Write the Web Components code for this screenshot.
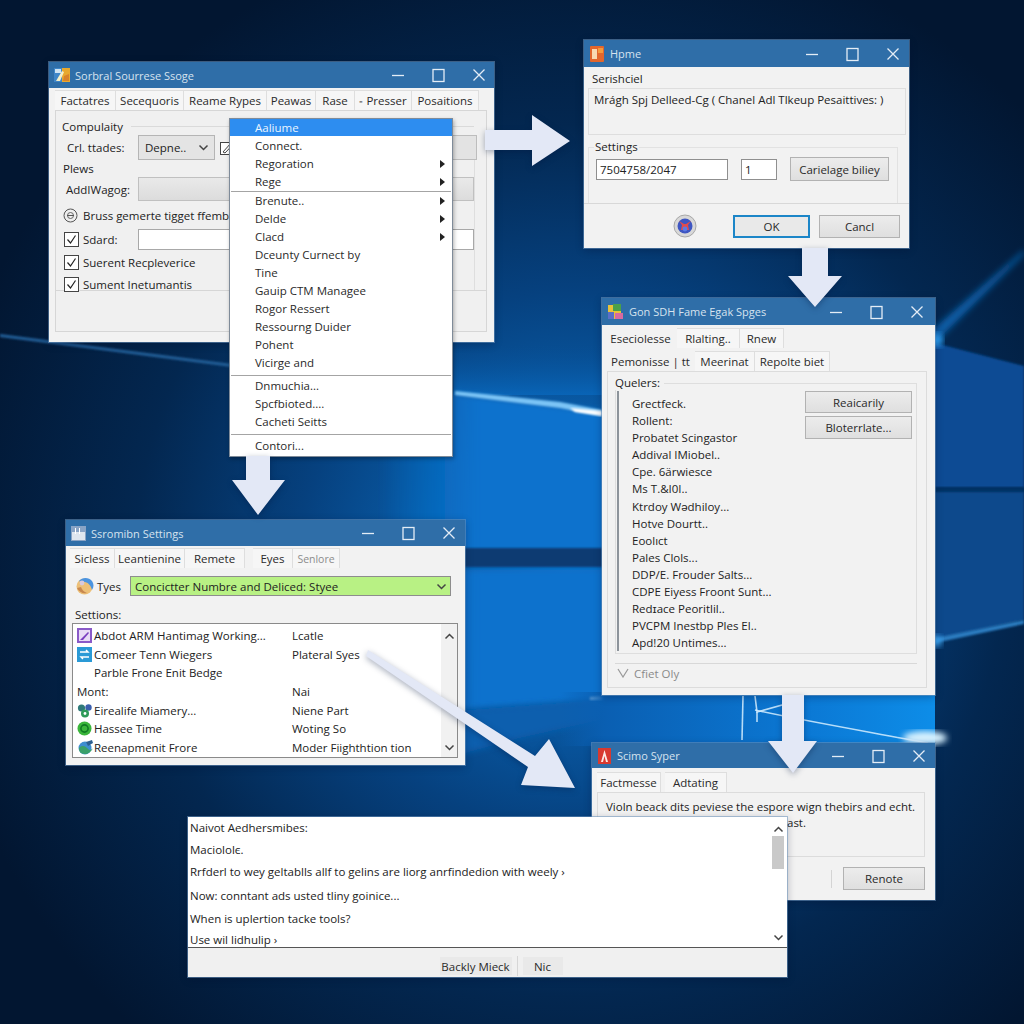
<!doctype html>
<html>
<head>
<meta charset="utf-8">
<title>Windows</title>
<style>
  html, body { margin: 0; width: 1024px; height: 1024px; overflow: hidden; background: #031c3e; }
  body { position: relative; font: 11.5px "Open Sans", "Liberation Sans", sans-serif; color: #222; }
</style>
</head>
<body>
<desktop-wallpaper></desktop-wallpaper>
<source-window></source-window>
<flow-arrow points="485,130 532,130 532,115 570,141 532,166 532,150 485,150"></flow-arrow>
<home-dialog></home-dialog>
<queries-window></queries-window>
<flow-arrow points="802,248 828,248 828,276 842,276 815,307 788,276 802,276"></flow-arrow>
<sections-window></sections-window>
<flow-arrow points="246,456 270,456 270,480 285,480 258,515 232,480 246,480"></flow-arrow>
<flow-arrow points="368,650 535,756 549,739 575,788 521,785 528,767 366,656"></flow-arrow>
<style-window></style-window>
<flow-arrow points="782,695 804,695 804,741 817,741 793,773 768,741 782,741"></flow-arrow>
<notes-window></notes-window>

<script>
const chevron = (dir) => `<svg width="11" height="7" viewBox="0 0 11 7"><path d="${dir === 'up' ? 'M1.5 5.5 5.5 1.5 9.5 5.5' : 'M1.5 1.5 5.5 5.5 9.5 1.5'}" fill="none" stroke="#444" stroke-width="1.5"/></svg>`;

class DesktopWallpaper extends HTMLElement {
    constructor() {
        super();
        this.attachShadow({ mode: 'open' });
        this.shadowRoot.innerHTML = `
            <style>
                :host { position: absolute; inset: 0; display: block; }
                svg { display: block; }
            </style>
            <svg width="1024" height="1024" viewBox="0 0 1024 1024">
                <defs>
                    <radialGradient id="sky" gradientUnits="userSpaceOnUse" cx="570" cy="560" r="640">
                        <stop offset="0" stop-color="#0b70c8"/>
                        <stop offset=".22" stop-color="#095ca8"/>
                        <stop offset=".42" stop-color="#06417f"/>
                        <stop offset=".68" stop-color="#032750"/>
                        <stop offset="1" stop-color="#021631"/>
                    </radialGradient>
                    <linearGradient id="gap" gradientUnits="userSpaceOnUse" x1="560" x2="935" y1="0" y2="0">
                        <stop offset="0" stop-color="#0a5fb2" stop-opacity="0"/>
                        <stop offset=".12" stop-color="#0a5fb2"/>
                        <stop offset=".65" stop-color="#0b78d4"/>
                        <stop offset="1" stop-color="#0d8de8"/>
                    </linearGradient>
                    <linearGradient id="fade" gradientUnits="userSpaceOnUse" x1="380" x2="480" y1="0" y2="0">
                        <stop offset="0" stop-color="#0a72cd" stop-opacity="0"/>
                        <stop offset="1" stop-color="#0a72cd"/>
                    </linearGradient>
                    <linearGradient id="upper" x1="0" x2="0" y1="0" y2="1">
                        <stop offset="0" stop-color="#074e94" stop-opacity="0"/>
                        <stop offset="1" stop-color="#0964b6"/>
                    </linearGradient>
                    <filter id="b1"><feGaussianBlur stdDeviation="1"/></filter>
                    <filter id="b3"><feGaussianBlur stdDeviation="3"/></filter>
                </defs>
                <rect width="1024" height="1024" fill="url(#sky)"/>
                <rect x="454" y="345" width="150" height="50" fill="url(#upper)"/>
                <polygon points="380,384 605,412 605,560 380,560" fill="url(#fade)" filter="url(#b3)"/>
                <polygon points="380,570 605,570 605,700 380,716" fill="url(#fade)" filter="url(#b3)"/>
                <rect x="440" y="548" width="170" height="19" fill="#0a3a72" filter="url(#b1)"/>
                <polygon points="455,391 560,402 602,410 602,416 560,408 455,395" fill="#7cc4f6" filter="url(#b1)"/>
                <polygon points="570,408 602,411 602,416 575,412" fill="#fff" filter="url(#b1)"/>
                <polygon points="440,712 600,700 600,720 520,738 440,760" fill="#0a5fae" filter="url(#b3)"/>
                <polygon points="590,697 603,696 603,700 590,700" fill="#e8f6ff" filter="url(#b1)"/>
                <polygon points="0,334 232,364 232,367 0,337" fill="#245f98" filter="url(#b1)"/>
                <polygon points="935,343 1024,366 1024,488 935,488" fill="#084c94" filter="url(#b1)"/>
                <rect x="930" y="487" width="94" height="6" fill="#063263" filter="url(#b1)"/>
                <polygon points="935,492 1024,492 1024,620 935,640" fill="#07488c" filter="url(#b1)"/>
                <polygon points="930,332 1024,250 1024,254 936,342" fill="#0c5ea8" filter="url(#b3)"/>
                <circle cx="936" cy="340" r="7" fill="#2fa0f4" filter="url(#b3)"/>
                <polygon points="935,638 1024,620 1024,624 935,643" fill="#2b7cc0" filter="url(#b1)"/>
                <circle cx="936" cy="641" r="6" fill="#3da8f6" filter="url(#b3)"/>
                <rect x="560" y="692" width="375" height="54" fill="url(#gap)"/>
                <ellipse cx="925" cy="738" rx="22" ry="7" fill="#d8f2ff" filter="url(#b3)"/>
                <g fill="none" stroke="#d6eeff" stroke-opacity=".85" stroke-width="1.6">
                    <path d="M755 710 C 810 722 870 732 928 743"/>
                    <path d="M755 696 757 712 800 700"/>
                    <path d="M757 712 757 722"/>
                    <path d="M743 696 742 740"/>
                </g>
            </svg>
        `;
    }
}

class FlowArrow extends HTMLElement {
    constructor() {
        super();
        this.attachShadow({ mode: 'open' });
    }
    connectedCallback() {
        this.shadowRoot.innerHTML = `
            <style>
                :host { position: absolute; left: 0; top: 0; display: block; width: 1024px; height: 1024px; pointer-events: none; }
                svg { display: block; filter: drop-shadow(0 2px 3px rgba(0,20,60,.35)); }
            </style>
            <svg width="1024" height="1024"><polygon points="${this.getAttribute('points')}" fill="#e3e8f6"/></svg>
        `;
    }
}

class AppWindow extends HTMLElement {
    constructor() {
        super();
        this.attachShadow({ mode: 'open' });
    }
    connectedCallback() {
        const a = (n) => this.getAttribute(n);
        this.style.left = a('x') + 'px';
        this.style.top = a('y') + 'px';
        this.style.width = a('w') + 'px';
        this.style.height = a('h') + 'px';
        const bar = a('heading') === null ? '' : `
            <div class="title" style="height:${a('bar') || 26}px;padding-right:${a('pad') || 10}px">
                <slot name="icon"></slot>
                <span>${a('heading')}</span>
                <svg width="93" height="16" viewBox="0 0 93 16" fill="none" stroke="#e4edf6" stroke-width="1.3">
                    <path d="M0 8.5H12"/>
                    <rect x="41" y="2.5" width="11" height="12"/>
                    <path d="M81.5 2.5 92.5 13.5M92.5 2.5 81.5 13.5"/>
                </svg>
            </div>`;
        this.shadowRoot.innerHTML = `
            <style>
                :host { position: absolute; display: block; box-sizing: border-box; background: #f2f2f2; box-shadow: 0 0 0 1px rgba(110,150,190,.55), 0 2px 8px rgba(0,10,40,.3); }
                .title { display: flex; align-items: center; gap: 5px; padding-left: 5px; background: #2f6ea8; color: #d6e3ef; font-size: 11px; }
                .title span { flex: 1; white-space: nowrap; }
                ::slotted(svg) { flex: none; }
                .title svg { flex: none; }
                .body { display: block; }
            </style>
            ${bar}
            <div class="body"><slot></slot></div>
        `;
    }
}

class WinTabs extends HTMLElement {
    constructor() {
        super();
        this.attachShadow({ mode: 'open' });
        this.shadowRoot.innerHTML = `
            <style>
                :host { display: flex; align-items: stretch; height: 20px; }
            </style>
            <slot></slot>
        `;
    }
}

class WinTab extends HTMLElement {
    constructor() {
        super();
        this.attachShadow({ mode: 'open' });
        this.shadowRoot.innerHTML = `
            <style>
                :host { display: flex; flex: none; align-items: center; justify-content: center; box-sizing: border-box; white-space: nowrap; background: #f6f6f6; border: 1px solid #dedede; border-bottom: 0; border-left: 0; color: #2a2a2a; }
                :host([dim]) { color: #8c8c8c; font-size: 10.5px; }
                :host([flat]) { background: transparent; border-color: transparent; }
            </style>
            <slot></slot>
        `;
    }
    connectedCallback() {
        this.style.width = this.getAttribute('w') + 'px';
        if (this.hasAttribute('gap')) this.style.marginLeft = this.getAttribute('gap') + 'px';
    }
}

class WinButton extends HTMLElement {
    constructor() {
        super();
        this.attachShadow({ mode: 'open' });
        this.shadowRoot.innerHTML = `
            <style>
                :host { display: flex; flex: none; align-items: center; justify-content: center; box-sizing: border-box; white-space: nowrap; background: linear-gradient(#ececec, #dfdfdf); border: 1px solid #b2b2b2; color: #2a2a2a; }
                :host([primary]) { border: 2px solid #1c86c8; background: #e9e9e9; }
                :host([plain]) { border: 0; background: #e9e9e9; }
            </style>
            <slot></slot>
        `;
    }
}

class ContextMenu extends HTMLElement {
    constructor() {
        super();
        this.attachShadow({ mode: 'open' });
        this.shadowRoot.innerHTML = `
            <style>
                :host { position: absolute; display: block; box-sizing: border-box; background: #fff; border: 1px solid #7f8b99; box-shadow: 1px 2px 4px rgba(0,0,0,.3); }
            </style>
            <slot></slot>
        `;
    }
}

class MenuItem extends HTMLElement {
    constructor() {
        super();
        this.attachShadow({ mode: 'open' });
        this.shadowRoot.innerHTML = `
            <style>
                :host { display: flex; align-items: center; justify-content: space-between; box-sizing: border-box; height: 18px; padding: 0 7px 2px 25px; white-space: nowrap; color: #2a2a2a; }
                :host([active]) { background: #2d8df0; color: #eaf5ff; height: 17px; margin-bottom: 1px; padding-bottom: 1px; }
                i { display: none; width: 0; height: 0; margin-top: 2px; border-left: 5px solid #222; border-top: 4px solid transparent; border-bottom: 4px solid transparent; }
                :host([more]) i { display: block; }
            </style>
            <slot></slot><i></i>
        `;
    }
}

class MenuLine extends HTMLElement {
    constructor() {
        super();
        this.attachShadow({ mode: 'open' });
        this.shadowRoot.innerHTML = `
            <style>
                :host { display: block; height: 1px; margin: 0 1px; background: #a4a4a4; }
            </style>
        `;
    }
}

class CheckRow extends HTMLElement {
    constructor() {
        super();
        this.attachShadow({ mode: 'open' });
        this.shadowRoot.innerHTML = `
            <style>
                :host { display: flex; align-items: center; gap: 4px; padding-left: 8px; white-space: nowrap; }
                span { flex: none; width: 13px; height: 13px; border: 1px solid #444; background: #fff; display: flex; align-items: center; justify-content: center; }
            </style>
            <span><svg width="11" height="11" viewBox="0 0 11 11"><path d="M1.5 5.5 4.5 9 9.5 1.5" fill="none" stroke="#222" stroke-width="1.2"/></svg></span>
            <slot></slot>
        `;
    }
}

class SourceWindow extends HTMLElement {
    constructor() {
        super();
        this.attachShadow({ mode: 'open' });
        this.shadowRoot.innerHTML = `
            <style>
                :host { display: contents; }
                win-tabs { margin: 2px 0 0 6px; }
                .panel { box-sizing: border-box; margin: 0 7px 0 6px; height: 222px; padding: 7px 0 0 0; border: 1px solid #d6d6d6; background: #f0f0f0; }
                .row { display: flex; align-items: center; white-space: nowrap; }
                .legend { height: 17px; padding-left: 6px; gap: 8px; }
                .legend hr { flex: 1; margin: 0 12px 0 0; border: 0; border-top: 1px solid #dadada; }
                .crl { height: 25px; }
                .crl label { width: 82px; padding-left: 11px; box-sizing: border-box; flex: none; }
                .select { box-sizing: border-box; flex: none; width: 77px; height: 25px; display: flex; align-items: center; justify-content: space-between; padding: 0 5px 0 6px; background: #e4e4e4; border: 1px solid #b5b5b5; }
                .fill { flex: 1; box-sizing: border-box; height: 25px; margin: 0 9px 0 4px; background: #e3e3e3; border: 1px solid #bdbdbd; }
                .group { box-sizing: border-box; height: 131px; margin-right: 11px; border-right: 1px solid #dedede; }
                .add { height: 24px; }
                .add label { width: 82px; padding-left: 10px; box-sizing: border-box; flex: none; }
                .add div { flex: 1; height: 24px; box-sizing: border-box; background: linear-gradient(#e9e9e9, #dcdcdc); border: 1px solid #c0c0c0; }
                .radio { height: 28px; gap: 5px; padding-left: 7px; }
                .sdard { height: 21px; }
                .sdard check-row { height: 21px; width: 82px; flex: none; box-sizing: border-box; }
                .sdard div { flex: 1; height: 21px; box-sizing: border-box; background: #fff; border: 1px solid #a8a8a8; }
                check-row { height: 25px; }
                .line { height: 0; margin-top: -1px; border-bottom: 1px solid #d6d6d6; }
                context-menu { left: 180px; top: 56px; width: 224px; height: 339px; }
                .s2 { margin: 3px 1px 1px; }
                .s3 { margin: 3px 1px 2px; }
            </style>
            <app-window heading="Sorbral Sourrese Ssoge" pad="9" x="49" y="62" w="445" h="280">
                <svg slot="icon" width="16" height="16" viewBox="0 0 16 16"><rect y="1" width="9" height="14" fill="#3f86c8"/><rect x="8" y="1" width="8" height="14" fill="#e8a92f"/><path d="M2 14 8 4l2 1-4 9z" fill="#f5efc8"/><path d="M1 2h6v4H1z" fill="#cfe3f2"/><path d="M10 9l5-2v7h-6z" fill="#d9822a"/></svg>
                <win-tabs>
                    <win-tab w="61">Factatres</win-tab>
                    <win-tab w="68">Secequoris</win-tab>
                    <win-tab w="83">Reame Rypes</win-tab>
                    <win-tab w="49">Peawas</win-tab>
                    <win-tab w="39">Rase</win-tab>
                    <win-tab w="57">⁃ Presser</win-tab>
                    <win-tab w="67">Posaitions</win-tab>
                </win-tabs>
                <div class="panel">
                    <div class="row legend"><span>Compulaity</span><hr></div>
                    <div class="row crl">
                        <label>Crl. ttades:</label>
                        <div class="select"><span>Depne..</span>${chevron('down')}</div>
                        <svg style="margin-left:5px;flex:none" width="14" height="16" viewBox="0 0 14 16"><rect x=".5" y="2.5" width="10" height="12" fill="#fff" stroke="#444"/><path d="M3 12 11 3l2 1.5L5 13z" fill="#fff" stroke="#444"/></svg>
                        <div class="fill"></div>
                    </div>
                    <div class="group">
                        <div class="row legend" style="padding-left:7px"><span>Plews</span></div>
                        <div class="row add"><label>AddIWagog:</label><div></div></div>
                        <div class="row radio">
                            <svg width="15" height="15" viewBox="0 0 15 15"><circle cx="7.5" cy="7.5" r="6.5" fill="#eee" stroke="#555"/><circle cx="7.5" cy="7.5" r="3" fill="none" stroke="#666"/><path d="M4 7.5h7" stroke="#555"/></svg>
                            <span>Bruss gemerte tigget ffemb</span>
                        </div>
                        <div class="row sdard"><check-row>Sdard:</check-row><div></div></div>
                        <check-row>Suerent Recpleverice</check-row>
                        <check-row style="height:18px">Sument Inetumantis</check-row>
                    </div>
                    <div class="line"></div>
                </div>
                <context-menu>
                    <menu-item active>Aaliume</menu-item>
                    <menu-item>Connect.</menu-item>
                    <menu-item more>Regoration</menu-item>
                    <menu-item more>Rege</menu-item>
                    <menu-line></menu-line>
                    <menu-item more>Brenute..</menu-item>
                    <menu-item more>Delde</menu-item>
                    <menu-item more>Clacd</menu-item>
                    <menu-item>Dceunty Curnect by</menu-item>
                    <menu-item>Tine</menu-item>
                    <menu-item>Gauip  CTM Managee</menu-item>
                    <menu-item>Rogor Ressert</menu-item>
                    <menu-item>Ressourng Duider</menu-item>
                    <menu-item>Pohent</menu-item>
                    <menu-item>Vicirge and</menu-item>
                    <menu-line class="s2"></menu-line>
                    <menu-item>Dnmuchia...</menu-item>
                    <menu-item>Spcfbioted....</menu-item>
                    <menu-item>Cacheti Seitts</menu-item>
                    <menu-line class="s3"></menu-line>
                    <menu-item>Contori...</menu-item>
                </context-menu>
            </app-window>
        `;
    }
}

class HomeDialog extends HTMLElement {
    constructor() {
        super();
        this.attachShadow({ mode: 'open' });
        this.shadowRoot.innerHTML = `
            <style>
                :host { display: contents; }
                .cap { height: 21px; line-height: 23px; padding-left: 8px; }
                .box { box-sizing: border-box; height: 47px; margin: 0 3px 0 4px; padding: 3px 5px; border: 1px solid #dedede; white-space: nowrap; }
                .settings { box-sizing: border-box; height: 56px; margin: 12px 11px 0 4px; border: 1px solid #e2e2e2; border-bottom: 0; }
                .settings .leg { display: block; width: max-content; margin: -9px 0 0 5px; padding: 0 1px; background: #f2f2f2; }
                .ctl { display: flex; align-items: center; margin: 3px 0 0 7px; }
                .in { box-sizing: border-box; height: 21px; display: flex; align-items: center; padding-left: 3px; background: #fff; border: 1px solid #8f8f8f; }
                .foot { display: flex; align-items: center; justify-content: flex-end; height: 44px; padding-right: 9px; border-top: 1px solid #d8d8d8; }
                .foot win-button { height: 23px; }
            </style>
            <app-window heading="Hpme" bar="27" x="584" y="40" w="325" h="208">
                <svg slot="icon" width="16" height="18" viewBox="0 0 16 18"><rect x="1" y="1" width="14" height="16" rx="1" fill="#e2662c"/><rect x="3" y="4" width="5" height="10" fill="#f8d8b0"/><path d="M9 3h5v5H9z" fill="#f39a3c"/></svg>
                <div class="cap">Serishciel</div>
                <div class="box">Mrágh Spj Delleed-Cg ( Chanel Adl Tlkeup Pesaittives: )</div>
                <div class="settings">
                    <span class="leg">Settings</span>
                    <div class="ctl">
                        <div class="in" style="width:132px">7504758/2047</div>
                        <div class="in" style="width:36px;margin-left:13px">1</div>
                        <win-button style="width:99px;height:24px;margin-left:13px">Carielage biliey</win-button>
                    </div>
                </div>
                <div class="foot">
                    <svg style="margin-right:36px" width="24" height="24" viewBox="0 0 24 24"><circle cx="12" cy="12" r="11" fill="#d8d8d8" stroke="#a8a8a8"/><circle cx="12" cy="12" r="7.5" fill="#3e56c2"/><path d="M6 7l3 4-1 5h3l1-3 1 3h3l-1-5 3-4-5 3h-2z" fill="#e24b4b"/><circle cx="12" cy="15" r="2.4" fill="#5a7ae6"/></svg>
                    <win-button primary style="width:77px">OK</win-button>
                    <win-button style="width:81px;margin-left:9px">Cancl</win-button>
                </div>
            </app-window>
        `;
    }
}

class QueriesWindow extends HTMLElement {
    constructor() {
        super();
        this.attachShadow({ mode: 'open' });
        const rows = ['Grectfeck.', 'Rollent:', 'Probatet Scingastor', 'Addival IMiobel..', 'Cpe. 6ärwiesce', 'Ms  T.&I0I..', 'Ktrdoy Wǝdhiloy...', 'Hotve Dourtt..', 'Eoolıct', 'Pales Clols...', 'DDP/E. Frouder Salts...', 'CDPE Eiyess Froont Sunt...', 'Redɪace Peoritlil..', 'PVCPM Inestbp Ples El..', 'Apd!20 Untimes...'];
        this.shadowRoot.innerHTML = `
            <style>
                :host { display: contents; }
                .t1 { margin: 3px 0 0 3px; height: 20px; }
                .t2 { margin: 3px 0 0 5px; height: 20px; }
                .panel { box-sizing: border-box; height: 317px; margin: 0 8px 0 5px; padding: 11px 9px 0 7px; border: 1px solid #dcdcdc; }
                .group { box-sizing: border-box; height: 271px; border: 1px solid #dedede; }
                .leg { display: block; width: max-content; margin: -9px 0 0 -1px; padding-right: 4px; background: #f2f2f2; }
                .cols { display: grid; grid-template-columns: 1fr 107px; margin: 1px 4px 0 1px; height: 258px; }
                ul { margin: 0; padding: 4px 0 0 13px; list-style: none; border-left: 2px solid #8d949b; }
                li { height: 17.1px; line-height: 17.1px; white-space: nowrap; }
                .btns { display: flex; flex-direction: column; gap: 3px; }
                .btns win-button { height: 22px; }
                .foot { margin-top: 9px; border-top: 1px solid #d8d8d8; padding: 0 0 0 2px; display: flex; align-items: center; gap: 5px; color: #8a8a8a; height: 18px; }
            </style>
            <app-window heading="Gon SDH Fame Egak Spges" bar="27" pad="12" x="602" y="298" w="333" h="397">
                <svg slot="icon" width="17" height="18" viewBox="0 0 17 18"><rect x="1" y="2" width="13" height="14" fill="#e8c23a"/><rect x="6" y="1" width="8" height="7" fill="#4aa04a"/><rect x="1" y="9" width="6" height="7" fill="#5a6ec8"/><rect x="8" y="10" width="8" height="6" fill="#d86aa0"/></svg>
                <win-tabs class="t1">
                    <win-tab w="72" flat>Eseciolesse</win-tab>
                    <win-tab w="63">Rlalting..</win-tab>
                    <win-tab w="44">Rnew</win-tab>
                </win-tabs>
                <win-tabs class="t2">
                    <win-tab w="88" flat>Pemonisse | tt</win-tab>
                    <win-tab w="60">Meerinat</win-tab>
                    <win-tab w="75">Repolte biet</win-tab>
                </win-tabs>
                <div class="panel">
                    <div class="group">
                        <span class="leg">Quelers:</span>
                        <div class="cols">
                            <ul>${rows.map((r) => `<li>${r}</li>`).join('')}</ul>
                            <div class="btns">
                                <win-button>Reaicarily</win-button>
                                <win-button style="height:23px">Bloterrlate...</win-button>
                            </div>
                        </div>
                    </div>
                    <div class="foot">
                        <svg width="12" height="10" viewBox="0 0 12 10"><path d="M1 1 6 9 11 1" fill="none" stroke="#999" stroke-width="1.2"/></svg>
                        <span>Cfiet Oly</span>
                    </div>
                </div>
            </app-window>
        `;
    }
}

class SectionsWindow extends HTMLElement {
    constructor() {
        super();
        this.attachShadow({ mode: 'open' });
        const ic = {
            purple: '<svg width="15" height="15" viewBox="0 0 15 15"><rect width="15" height="15" fill="#8a5ac8"/><rect x="2" y="2" width="11" height="11" fill="#e8dcf5"/><path d="M3 12 11 4l1 1-6 7z" fill="#7a3fc0"/></svg>',
            blue: '<svg width="15" height="15" viewBox="0 0 15 15"><rect width="15" height="15" fill="#2a9ad6"/><path d="M3 5h8l-2-2M12 10H4l2 2" fill="none" stroke="#fff" stroke-width="1.4"/></svg>',
            gears: '<svg width="16" height="15" viewBox="0 0 16 15"><circle cx="4.5" cy="5" r="3.6" fill="#2f7a7a"/><circle cx="11.5" cy="4.5" r="3.2" fill="#3a5fae"/><circle cx="8" cy="10.5" r="4" fill="#2e9a58"/><circle cx="8" cy="10.5" r="1.4" fill="#fff"/></svg>',
            green: '<svg width="15" height="15" viewBox="0 0 15 15"><circle cx="7.5" cy="7.5" r="7" fill="#3ab53a"/><circle cx="7.5" cy="7.5" r="3.6" fill="none" stroke="#0f7a22" stroke-width="1.6"/></svg>',
            globe: '<svg width="17" height="16" viewBox="0 0 17 16"><circle cx="8" cy="9" r="6.5" fill="#3d8ed0"/><path d="M2 9c3-3 6-2 8 0s3 3 5 1-2 5-7 5-6-3-6-6z" fill="#3aa06a"/><path d="M9 3l6-2 1 3-5 3z" fill="#2c5f90"/></svg>'
        };
        const rows = [
            [ic.purple, 'Abdot ARM Hantimag Working...', 'Lcatle'],
            [ic.blue, 'Comeer Tenn Wiegers', 'Plateral Syes'],
            ['<i></i>', 'Parble Frone Enit Bedge', ''],
            ['', 'Mont:', 'Nai'],
            [ic.gears, 'Eirealife Miamery...', 'Niene Part'],
            [ic.green, 'Hassee Time', 'Woting So'],
            [ic.globe, 'Reenapmenit Frore', 'Moder Fiighthtion tion']
        ];
        this.shadowRoot.innerHTML = `
            <style>
                :host { display: contents; }
                win-tabs { margin: 2px 0 0 4px; }
                .tyes { display: flex; align-items: center; height: 20px; margin: 8px 14px 0 0; padding-left: 10px; }
                .tyes > span { width: 33px; margin-left: 3px; flex: none; }
                .combo { flex: 1; box-sizing: border-box; height: 20px; display: flex; align-items: center; justify-content: space-between; padding: 0 3px 0 4px; background: #b8f184; border: 1px solid #8d8d8d; white-space: nowrap; }
                .cap { height: 27px; line-height: 38px; padding-left: 9px; }
                .list { box-sizing: border-box; display: flex; height: 135px; margin: 0 7px 0 6px; background: #fff; border: 1px solid #8a8a8a; }
                .rows { flex: 1; padding: 2px 0 0 4px; }
                .r { display: grid; grid-template-columns: 17px 198px 1fr; align-items: center; height: 18.7px; white-space: nowrap; }
                .r.wide b { grid-column: 1 / 3; font-weight: 400; }
                .r svg, .r i { display: block; }
                .bar { width: 16px; background: #f1f1f1; display: flex; flex-direction: column; justify-content: space-between; align-items: center; padding: 9px 0 6px; }
            </style>
            <app-window heading="Ssromibn Settings" x="66" y="520" w="399" h="245">
                <svg slot="icon" width="15" height="15" viewBox="0 0 15 15"><rect width="15" height="15" fill="#8aa4c6"/><rect x="1" y="6" width="13" height="8" fill="#dfe6ef"/><path d="M4 2h1v6H4zM8 2h1v6H8z" fill="#fff"/></svg>
                <win-tabs>
                    <win-tab w="45">Sicless</win-tab>
                    <win-tab w="70">Leantienine</win-tab>
                    <win-tab w="60">Remete</win-tab>
                    <win-tab w="40" gap="8">Eyes</win-tab>
                    <win-tab w="47" dim>Senlore</win-tab>
                </win-tabs>
                <div class="tyes">
                    <svg width="18" height="18" viewBox="0 0 18 18" style="flex:none"><circle cx="8.5" cy="9.5" r="8" fill="#edc078"/><path d="M3 4C6 0 13 0 16 4c2 3 2 6 0 9-1-4-3-7-7-8S4 5 3 4z" fill="#4b94e0"/><path d="M1 11c2 4 6 6 10 5-3-1-5-3-6-6z" fill="#c88850"/><circle cx="6" cy="6" r="2.4" fill="#d8c9dc"/></svg>
                    <span>Tyes</span>
                    <div class="combo"><span>Concictter Numbre and Deliced: Styee</span>${chevron('down')}</div>
                </div>
                <div class="cap">Settions:</div>
                <div class="list">
                    <div class="rows">
                        ${rows.map(([i, a, b]) => i === '' ? `<div class="r wide"><b>${a}</b><span>${b}</span></div>` : `<div class="r">${i}<span>${a}</span><span>${b}</span></div>`).join('')}
                    </div>
                    <div class="bar">${chevron('up')}${chevron('down')}</div>
                </div>
            </app-window>
        `;
    }
}

class StyleWindow extends HTMLElement {
    constructor() {
        super();
        this.attachShadow({ mode: 'open' });
        this.shadowRoot.innerHTML = `
            <style>
                :host { display: contents; }
                win-tabs { margin: 4px 0 0 5px; }
                .panel { box-sizing: border-box; height: 65px; margin: 0 10px 0 5px; padding: 6px 0 0 8px; border: 1px solid #dcdcdc; white-space: nowrap; }
                .panel p { margin: 0; height: 16px; line-height: 16px; }
                .foot { display: flex; align-items: center; justify-content: flex-end; height: 43px; padding-right: 10px; }
                .foot i { width: 1px; height: 18px; background: #d4d4d4; margin-right: 11px; }
                .foot win-button { width: 82px; height: 23px; }
            </style>
            <app-window heading="Scimo Syper" bar="25" x="592" y="743" w="343" h="157">
                <svg slot="icon" width="15" height="18" viewBox="0 0 15 18"><rect x="1" y="1" width="13" height="16" fill="#d8392f"/><path d="M4 15 7.5 3 11 15H9L7.5 9 6 15z" fill="#fbe9e4"/></svg>
                <win-tabs>
                    <win-tab w="64">Factmesse</win-tab>
                    <win-tab w="62" gap="4">Adtating</win-tab>
                </win-tabs>
                <div class="panel">
                    <p>Violn beack dits peviese the espore wign thebirs and echt.</p>
                    <p style="padding-left:181px">ast.</p>
                </div>
                <div class="foot"><i></i><win-button>Renote</win-button></div>
            </app-window>
        `;
    }
}

class NotesWindow extends HTMLElement {
    constructor() {
        super();
        this.attachShadow({ mode: 'open' });
        const rows = [
            ['Naivot Aedhersmibes:', 20],
            ['Maciololє.', 24],
            ['Rrfderl to wey geltablls allf to gelins are liorg anrfindedion with weely ›', 20],
            ['Now: conntant ads usted tliny goinice...', 28],
            ['When is uplertion tacke tools?', 18],
            ['Use wil lidhulip ›', 20]
        ];
        this.shadowRoot.innerHTML = `
            <style>
                :host { display: contents; }
                .main { display: flex; box-sizing: border-box; height: 131px; background: #fff; border-bottom: 1px solid #555; }
                .rows { flex: 1; padding: 0 0 0 2px; }
                .rows div { display: flex; align-items: center; white-space: nowrap; }
                .rows div:last-child { padding-top: 4px; box-sizing: border-box; }
                .bar { width: 18px; display: flex; flex-direction: column; align-items: center; padding: 9px 0 6px; box-sizing: border-box; }
                .bar b { display: block; width: 12px; height: 33px; margin: 3px 0 auto; background: #c9c9c9; }
                .foot { display: flex; justify-content: center; align-items: center; height: 29px; padding: 7px 0 0 27px; box-sizing: border-box; background: #f0f0f0; }
                .foot win-button { height: 18px; }
                .foot i { width: 1px; height: 20px; margin: 0 5px; background: #d6d6d6; }
            </style>
            <app-window x="188" y="817" w="599" h="160">
                <div class="main">
                    <div class="rows">${rows.map(([t, h]) => `<div style="height:${h}px">${t}</div>`).join('')}</div>
                    <div class="bar">${chevron('up')}<b></b>${chevron('down')}</div>
                </div>
                <div class="foot">
                    <win-button plain style="width:72px">Backly Mieck</win-button>
                    <i></i>
                    <win-button plain style="width:40px">Nic</win-button>
                </div>
            </app-window>
        `;
    }
}

customElements.define('desktop-wallpaper', DesktopWallpaper);
customElements.define('flow-arrow', FlowArrow);
customElements.define('app-window', AppWindow);
customElements.define('win-tabs', WinTabs);
customElements.define('win-tab', WinTab);
customElements.define('win-button', WinButton);
customElements.define('context-menu', ContextMenu);
customElements.define('menu-item', MenuItem);
customElements.define('menu-line', MenuLine);
customElements.define('check-row', CheckRow);
customElements.define('source-window', SourceWindow);
customElements.define('home-dialog', HomeDialog);
customElements.define('queries-window', QueriesWindow);
customElements.define('sections-window', SectionsWindow);
customElements.define('style-window', StyleWindow);
customElements.define('notes-window', NotesWindow);
</script>
</body>
</html>
